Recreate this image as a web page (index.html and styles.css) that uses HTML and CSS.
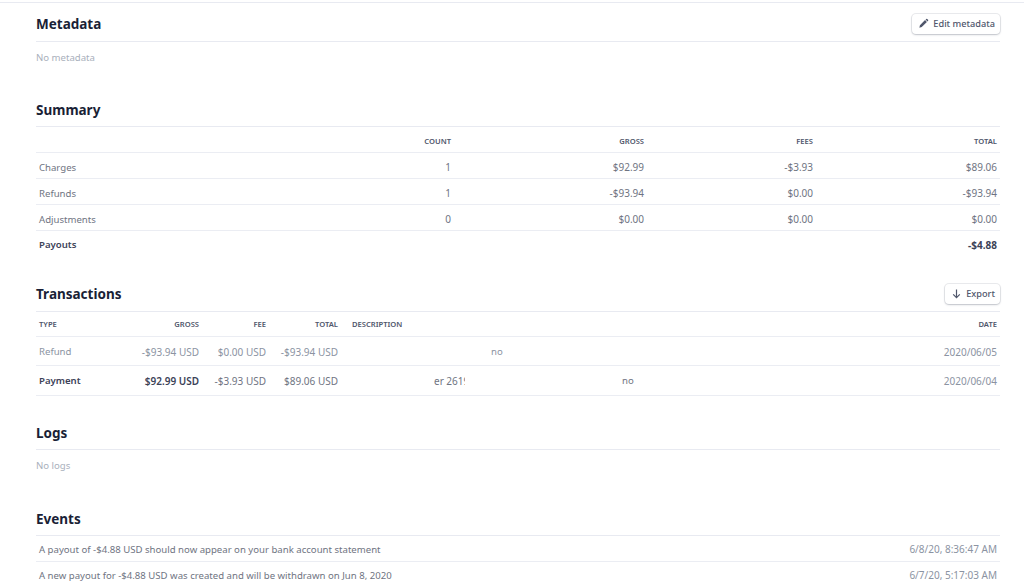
FILE: index.html
```html
<!DOCTYPE html>
<html lang="en">
<head>
<meta charset="utf-8">
<title>Payout</title>
<link rel="stylesheet" href="styles.css">
</head>
<body>
<main class="page">
  <section class="sec sec-meta">
    <header class="sec-head">
      <h2>Metadata</h2>
      <button class="btn" type="button">
        <svg class="ico" viewBox="0 0 12 12" width="12" height="12"><path d="M1.5 10.5l.6-2.6 5.6-5.6 2 2-5.6 5.6zM8.3 1.7l.7-.7a.7.7 0 0 1 1 0l1 1a.7.7 0 0 1 0 1l-.7.7z" fill="#4f566b"/></svg>
        Edit metadata
      </button>
    </header>
    <p class="empty">No metadata</p>
  </section>

  <section class="sec sec-summary">
    <header class="sec-head"><h2>Summary</h2></header>
    <div class="sum-row th"><span></span><span>COUNT</span><span>GROSS</span><span>FEES</span><span>TOTAL</span></div>
    <div class="sum-row"><span class="label">Charges</span><span>1</span><span>$92.99</span><span>-$3.93</span><span>$89.06</span></div>
    <div class="sum-row"><span class="label">Refunds</span><span>1</span><span>-$93.94</span><span>$0.00</span><span>-$93.94</span></div>
    <div class="sum-row"><span class="label">Adjustments</span><span>0</span><span>$0.00</span><span>$0.00</span><span>$0.00</span></div>
    <div class="sum-row total"><span class="label">Payouts</span><span></span><span></span><span></span><span>-$4.88</span></div>
  </section>

  <section class="sec sec-tx">
    <header class="sec-head">
      <h2>Transactions</h2>
      <button class="btn" type="button">
        <svg class="ico" viewBox="0 0 12 12" width="12" height="12"><path d="M6 1.5v9M2.4 7L6 10.6 9.6 7" fill="none" stroke="#4f566b" stroke-width="1.3"/></svg>
        Export
      </button>
    </header>
    <div class="tx-row th"><span>TYPE</span><span>GROSS</span><span>FEE</span><span>TOTAL</span><span>DESCRIPTION</span><span>DATE</span></div>
    <div class="tx-row refund"><span class="label">Refund</span><span>-$93.94 USD</span><span>$0.00 USD</span><span>-$93.94 USD</span><span class="desc"><span class="no-a label">no</span></span><span>2020/06/05</span></div>
    <div class="tx-row payment"><span class="label strong">Payment</span><span class="strong">$92.99 USD</span><span>-$3.93 USD</span><span>$89.06 USD</span><span class="desc"><span class="clip">er 2619</span><span class="no-b label">no</span></span><span class="date">2020/06/04</span></div>
  </section>

  <section class="sec sec-logs">
    <header class="sec-head"><h2>Logs</h2></header>
    <p class="empty">No logs</p>
  </section>

  <section class="sec sec-events">
    <header class="sec-head"><h2>Events</h2></header>
    <div class="ev-row"><span class="label">A payout of -$4.88 USD should now appear on your bank account statement</span><span class="date">6/8/20, 8:36:47 AM</span></div>
    <div class="ev-row"><span class="label">A new payout for -$4.88 USD was created and will be withdrawn on Jun 8, 2020</span><span class="date">6/7/20, 5:17:03 AM</span></div>
  </section>
</main>
</body>
</html>
```
FILE: styles.css
```css
* { box-sizing: border-box; }
html, body { margin: 0; height: 587px; overflow: hidden; background: #fff; }
body { font-family: "Noto Sans", "Open Sans", sans-serif; font-size: 10px; color: #6f7482; }
.page { margin-top: 2px; border-top: 1px solid #e8eaf1; padding: 0 24px 0 36px; }
.sec-head { display: flex; justify-content: space-between; align-items: center; height: 27px; padding-bottom: 6px; border-bottom: 1px solid #e8eaf1; }
h2 { margin: 0; font-size: 13.5px; line-height: 20px; font-weight: 700; color: #1a1f36; }
.sec-meta .sec-head { height: 39px; padding: 3px 0 0; }
.sec-summary { margin-top: 35px; }
.sec-tx { margin-top: 27px; }
.sec-tx .sec-head { height: 28px; padding-bottom: 8px; }
.sec-logs { margin-top: 27px; }
.sec-events { margin-top: 36px; }
.empty { margin: 0; padding-top: 9px; font-size: 9.6px; line-height: 14px; color: #a9b0bc; }
.btn { display: flex; align-items: center; gap: 4px; height: 20px; padding: 0 5px 0 6px; border: 0; border-radius: 4px; background: #fff; font: 500 9.2px "Noto Sans", "Open Sans", sans-serif; color: #4f566b; box-shadow: 0 0 0 1px rgba(60,66,87,.1), 0 1px 2px rgba(60,66,87,.24); }
.ico { flex: none; width: 11px; height: 11px; }
.sum-row, .tx-row, .ev-row { display: grid; align-items: center; border-bottom: 1px solid #ebedf3; }
.label { font-size: 9.6px; }
.sum-row { grid-template-columns: 100px 312px 193px 169px 184px; height: 26px; padding: 3px 3px 0; }
.sum-row > span { text-align: right; }
.sum-row > span:first-child { text-align: left; }
.sum-row.total { border-bottom: 0; padding-top: 1px; font-weight: 600; color: #3c4257; }
.sum-row.total > span:last-child { font-weight: 700; }
.sum-row.th { padding-top: 2px; }
.th { font-size: 7.6px; font-weight: 600; color: #4f566b; }
.tx-row { grid-template-columns: 50px 110px 67px 72px 1fr 80px; height: 29px; padding: 1px 3px 0; }
.tx-row.th { height: 25px; padding-top: 0; }
.tx-row.payment { height: 30px; padding-top: 0; }
.tx-row > span { text-align: right; white-space: nowrap; }
.tx-row > span:first-child { text-align: left; }
.tx-row > .desc, .tx-row.th > span:nth-child(5) { text-align: left; padding-left: 14px; }
.refund { color: #8b93a2; }
.strong { font-weight: 600; color: #3c4257; }
.date { color: #8b93a2; }
.desc { display: flex; align-items: center; }
.no-a { margin-left: 139px; }
.clip { display: inline-block; width: 31px; margin-left: 82px; overflow: hidden; }
.no-b { margin-left: 157px; }
.ev-row { grid-template-columns: 1fr auto; height: 26px; padding: 1px 3px 0; }
```
